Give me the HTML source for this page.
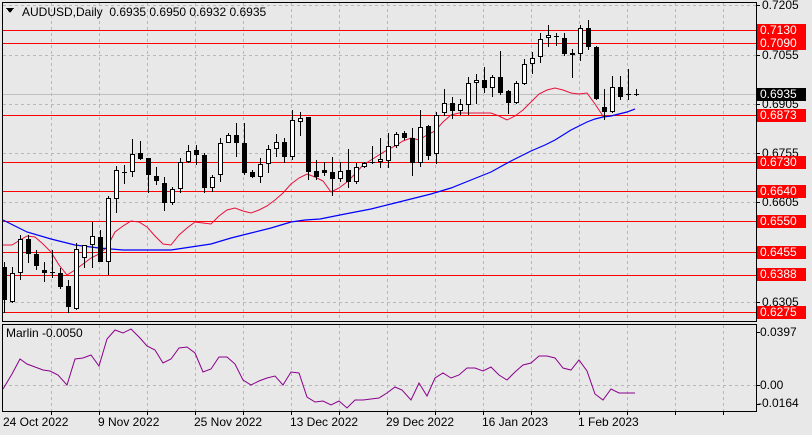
<!DOCTYPE html>
<html><head><meta charset="utf-8"><style>
html,body{margin:0;padding:0;background:#e8e8e8;}
#w{position:relative;width:812px;height:435px;overflow:hidden;background:#e8e8e8;font-family:"Liberation Sans",sans-serif;font-size:12px;color:#000;}
.t{position:absolute;white-space:nowrap;line-height:13px;}
.r{background:#ff0000;color:#fff;padding:0 3px 0 3px;left:757px;width:43px;}
</style></head><body><div id="w">
<svg id="s" width="812" height="435" style="position:absolute;left:0;top:0" shape-rendering="crispEdges"></svg>
<div class="t" style="left:22px;top:6px">AUDUSD,Daily&nbsp; 0.6935 0.6950 0.6932 0.6935</div>
<div class="t" style="left:762px;top:-1px">0.7205</div>
<div class="t" style="left:762px;top:49px">0.7055</div>
<div class="t" style="left:762px;top:98px">0.6905</div>
<div class="t" style="left:762px;top:147px">0.6755</div>
<div class="t" style="left:762px;top:196px">0.6605</div>
<div class="t" style="left:762px;top:296px">0.6305</div>
<div class="t r" style="top:24px">0.7130</div>
<div class="t r" style="top:37px">0.7090</div>
<div class="t" style="left:757px;top:88px;background:#000;color:#fff;padding:0 3px;width:43px">0.6935</div>
<div class="t r" style="top:109px">0.6873</div>
<div class="t r" style="top:156px">0.6730</div>
<div class="t r" style="top:185px">0.6640</div>
<div class="t r" style="top:215px">0.6550</div>
<div class="t r" style="top:246px">0.6455</div>
<div class="t r" style="top:268px">0.6388</div>
<div class="t r" style="top:306px">0.6275</div>
<div class="t" style="left:6px;top:327px">Marlin -0.0050</div>
<div class="t" style="left:760px;top:326px">0.0397</div>
<div class="t" style="left:760px;top:379px">0.00</div>
<div class="t" style="left:758px;top:397px">-0.0164</div>
<div class="t" style="left:3px;top:416px">24 Oct 2022</div>
<div class="t" style="left:98px;top:416px">9 Nov 2022</div>
<div class="t" style="left:194px;top:416px">25 Nov 2022</div>
<div class="t" style="left:290px;top:416px">13 Dec 2022</div>
<div class="t" style="left:386px;top:416px">29 Dec 2022</div>
<div class="t" style="left:482px;top:416px">16 Jan 2023</div>
<div class="t" style="left:578px;top:416px">1 Feb 2023</div>
</div>
<script>
var s=document.getElementById('s'),h='';
function L(x1,y1,x2,y2,c,d,w){h+='<line x1="'+x1+'" y1="'+y1+'" x2="'+x2+'" y2="'+y2+'" stroke="'+c+'" stroke-width="'+(w||1)+'"'+(d?' stroke-dasharray="3,3"':'')+'/>';}
for(var x=51;x<756;x+=48){L(x+.5,3,x+.5,321,'#b8b8b8',1);L(x+.5,325,x+.5,411,'#b8b8b8',1);L(x+.5,411,x+.5,415,'#000');}
[5,55,104,153,202,252,302].forEach(function(y){L(3,y+.5,756,y+.5,'#b8b8b8',1);L(756,y+.5,760,y+.5,'#000');});
L(3,385.5,756,385.5,'#b8b8b8',1);L(756,385.5,760,385.5,'#000');L(756,332.5,760,332.5,'#000');L(756,404.5,760,404.5,'#000');
L(3,94.5,756,94.5,'#c0c0c0');
[30,43,115,162,191,221,252,275,312].forEach(function(y){L(3,y+.5,756,y+.5,'#ff0000');});
h+='<rect x="2.5" y="2.5" width="754" height="319" fill="none" stroke="#000"/>';
h+='<rect x="2.5" y="324.5" width="754" height="87" fill="none" stroke="#000"/>';
h+='<polygon points="6,8 14,8 10,13" fill="#000"/>';
function P(pts,c,w){h+='<polyline fill="none" stroke="'+c+'" stroke-width="'+w+'" shape-rendering="auto" points="'+pts+'"/>';}
P('3,245 12,245 20,240 27,236 35,237 43,244 51,252 59,265 67,275 75,270 83,264 91,258 99,254 107,247 115,232 123,226 131,221 139,222 147,227 155,236 163,244 171,245 179,235 187,228 195,222 203,223 211,224 219,216 227,210 235,208 243,211 251,213 259,210 267,206 275,200 283,193 291,184 299,178 307,174 315,177 323,181 331,192 339,188 347,182 355,174 363,165 371,160 379,155 387,150 395,146 403,141 411,138 419,140 427,135 435,131 443,122 451,115 459,113 467,113 475,113 483,113 491,113 499,116 507,120 515,116 523,110 531,102 539,94 547,90 555,88 563,90 571,93 579,94 587,93 595,104 603,116 611,116 619,114 627,112 635,109','#e8103a',1);
P('3,220 15,226 27,232 51,239 75,245 99,248 123,250 147,250 171,250 191,247 211,244 231,238 251,233 271,228 291,222 305,220 320,219 345,214 371,209 391,204 411,199 431,194 451,188 471,180 491,172 511,161 531,151 545,145 555,140 563,135 571,130 579,126 587,122 595,119 603,117 611,116 619,114 627,112 635,109','#0000ff',1.2);
P('3,389 12,374 20,359 27,364 35,367 43,370 50,371 58,375 67,385 75,359 83,358 91,355 99,366 107,339 115,330 123,333 131,329 140,338 147,346 155,350 163,363 171,359 179,348 187,347 195,353 203,372 211,369 219,357 227,357 235,364 243,380 251,385 259,381 267,378 275,376 283,385 291,372 299,373 307,397 315,402 323,401 331,405 339,401 347,408 355,400 363,400 371,399 379,398 387,393 395,387 402,390 411,400 419,383 427,396 435,378 443,373 451,378 459,375 467,368 475,368 483,371 491,367 499,375 507,380 515,372 523,365 531,363 539,356 547,356 555,358 563,368 571,370 579,360 587,371 595,394 603,400 611,389 619,393 627,393 635,393','#8b008b',1);
var C=[[267,300,262,313,1],[273,302,267,303,0],[239,273,235,280,0],[239,254,235,263,1],[254,266,250,270,1],[270,273,262,282,1],[272,273,250,278,1],[273,287,268,289,1],[286,307,280,313,1],[249,309,243,310,0],
[245,258,245,268,0],[236,245,222,268,0],[237,262,230,257,1],[198,262,196,275,0],[170,199,166,213,0],[172,172,165,184,0],[154,172,139,177,0],[153,159,141,160,1],[158,175,158,193,1],[176,181,167,185,1],
[183,203,177,211,1],[189,203,187,205,0],[162,189,158,193,0],[151,162,145,163,0],[150,155,145,165,1],[155,188,153,193,1],[177,188,175,192,0],[143,175,138,182,0],[135,143,133,143,0],[135,143,123,157,1],
[143,173,123,175,1],[172,177,170,178,1],[164,177,158,183,0],[149,164,145,173,0],[142,149,134,157,0],[142,157,138,163,1],[120,157,110,160,0],[118,122,112,136,0],[117,172,117,180,1],[171,177,160,180,1],
[170,173,162,176,1],[172,179,157,196,1],[171,179,162,182,0],[170,182,149,188,1],[167,182,163,184,0],[163,167,162,168,0],[162,163,146,164,1],[159,162,138,168,0],[146,161,133,168,0],[134,146,132,148,0],
[133,138,131,140,1],[138,163,128,176,1],[127,163,110,167,0],[126,156,125,160,1],[115,154,112,164,0],[103,113,89,116,0],[103,111,97,119,1],[104,111,99,115,0],[83,105,77,115,0],[80,83,74,104,0],
[80,88,67,93,1],[77,88,75,97,0],[77,93,51,95,1],[91,103,90,114,1],[83,103,81,104,0],[64,84,59,85,0],[58,64,52,74,0],[39,57,33,63,0],[35,38,25,47,0],[36,37,33,46,1],
[38,54,33,56,1],[53,55,49,78,1],[28,54,25,61,0],[28,47,20,50,1],[47,99,46,100,1],[107,112,89,120,1],[87,112,76,113,0],[87,97,76,100,1],[94,95,69,100,1],[94,95,89,96,1]];
C.forEach(function(c,i){var x=Math.round(3.6+8*i);
L(x+.5,c[2],x+.5,c[3],'#000');
var bh=Math.max(c[1]-c[0],1);
if(bh<=1){L(x-2,c[0]+.5,x+3,c[0]+.5,'#000');}
else h+='<rect x="'+(x-2+.5)+'" y="'+(c[0]+.5)+'" width="4" height="'+(bh-1)+'" fill="'+(c[4]?'#000':'#fff')+'" stroke="#000"/>';
});
s.innerHTML=h;
</script>
</body></html>
